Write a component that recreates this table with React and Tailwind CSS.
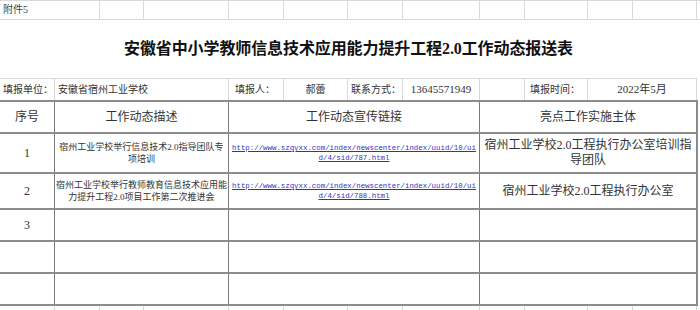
const serif = "font-['Liberation_Serif','Noto_Sans_CJK_SC',serif]";
const mono = "font-['Liberation_Mono','Noto_Sans_CJK_SC',monospace]";

const topCols = ["w-[44px]", "w-[85px]", "w-[55px]", "w-[64px]", "w-[55px]", "w-[77px]", "w-[45px]", "w-[63px]", "w-[45px]", "w-[64px]"];
const bottomCols = ["w-[55px]", "w-[45px]", "w-[44px]", "w-[85px]", "w-[55px]", "w-[64px]", "w-[55px]", "w-[77px]", "w-[45px]", "w-[63px]", "w-[45px]", "w-[64px]"];

const rows = [
  {
    no: "1",
    desc: ["宿州工业学校举行信息技术2.0指导团队专", "项培训"],
    link: ["http://www.szgyxx.com/index/newscenter/index/uuid/10/ui", "d/4/sid/787.html"],
    body: ["宿州工业学校2.0工程执行办公室培训指", "导团队"],
    h: "h-[40px]",
  },
  {
    no: "2",
    desc: ["宿州工业学校举行教师教育信息技术应用能", "力提升工程2.0项目工作第二次推进会"],
    link: ["http://www.szgyxx.com/index/newscenter/index/uuid/10/ui", "d/4/sid/788.html"],
    body: ["宿州工业学校2.0工程执行办公室"],
    h: "h-[36px]",
  },
  { no: "3", h: "h-[32px]" },
  { no: "", h: "h-[32px]" },
  { no: "", h: "h-[32px]" },
];

function Lines({ items }) {
  return items.map((t, i) => (
    <span key={i} className="block">
      {t}
    </span>
  ));
}

export default function App() {
  return (
    <div className={`w-[700px] h-[310px] overflow-hidden bg-white text-[#333] ${serif}`}>
      {/* sheet row 1 */}
      <div className="flex h-[20px] border-y border-[#d9d9d9]">
        <div className="w-[100px] border-r border-[#d9d9d9] pl-[3px] text-[10px] leading-[18px] text-[#444]">
          附件5
        </div>
        {topCols.map((c, i) => (
          <div key={i} className={`${c} border-r border-[#d9d9d9]`} />
        ))}
      </div>

      {/* title */}
      <div className="h-[59px] border-b border-[#d9d9d9] w-[697px] flex items-center justify-center">
        <h1 className="text-[16px] font-bold text-[#111] tracking-[-0.1px]">
          安徽省中小学教师信息技术应用能力提升工程2.0工作动态报送表
        </h1>
      </div>

      {/* reporter row */}
      <div className="flex h-[21px] text-[10px] text-[#333] leading-[21px]">
        <div className="w-[55px] border-r border-[#d9d9d9] pl-[3px]">填报单位：</div>
        <div className="w-[174px] border-r border-[#d9d9d9] pl-[3px]">安徽省宿州工业学校</div>
        <div className="w-[55px] border-r border-[#d9d9d9] pl-[6px]">填报人：</div>
        <div className="w-[64px] border-r border-[#d9d9d9] text-center">郝蕾</div>
        <div className="w-[55px] border-r border-[#d9d9d9] pl-[3px]">联系方式：</div>
        <div className="w-[77px] border-r border-[#d9d9d9] text-center text-[11px]">13645571949</div>
        <div className="w-[45px] border-r border-[#d9d9d9]" />
        <div className="w-[63px] border-r border-[#d9d9d9] pl-[5px]">填报时间：</div>
        <div className="w-[109px] border-r border-[#d9d9d9] text-center text-[11px]">2022年5月</div>
      </div>

      {/* table */}
      <div className="w-[698px] border-t-2 border-r-2 border-[#8c8c8c]">
        <div className="flex h-[32px] border-b-2 border-[#8c8c8c] text-[12px] text-[#333]">
          <div className="w-[55px] border-r border-[#7a7a7a] flex items-center justify-center">序号</div>
          <div className="w-[174px] border-r border-[#7a7a7a] flex items-center justify-center">工作动态描述</div>
          <div className="w-[251px] border-r border-[#7a7a7a] flex items-center justify-center">工作动态宣传链接</div>
          <div className="flex-1 flex items-center justify-center">亮点工作实施主体</div>
        </div>
        {rows.map((r, i) => (
          <div key={i} className={`flex ${r.h} border-b-2 border-[#8c8c8c]`}>
            <div className="w-[55px] border-r border-[#7a7a7a] flex items-center justify-center text-[12px]">
              {r.no}
            </div>
            <div className="w-[174px] border-r border-[#7a7a7a] flex items-center justify-center text-center text-[9px] leading-[12px] text-[#333]">
              {r.desc && (
                <div>
                  <Lines items={r.desc} />
                </div>
              )}
            </div>
            <div className={`w-[251px] border-r border-[#7a7a7a] flex items-center justify-center text-center text-[7.4px] leading-[10px] ${mono}`}>
              {r.link && (
                <a href="#" className="text-[#3030c8] underline whitespace-nowrap">
                  <Lines items={r.link} />
                </a>
              )}
            </div>
            <div className="flex-1 flex items-center justify-center text-center text-[12px] leading-[15px] text-[#333]">
              {r.body && (
                <div>
                  <Lines items={r.body} />
                </div>
              )}
            </div>
          </div>
        ))}
      </div>

      {/* trailing sheet row */}
      <div className="flex h-[6px]">
        {bottomCols.map((c, i) => (
          <div key={i} className={`${c} border-r border-[#d9d9d9]`} />
        ))}
      </div>
    </div>
  );
}
